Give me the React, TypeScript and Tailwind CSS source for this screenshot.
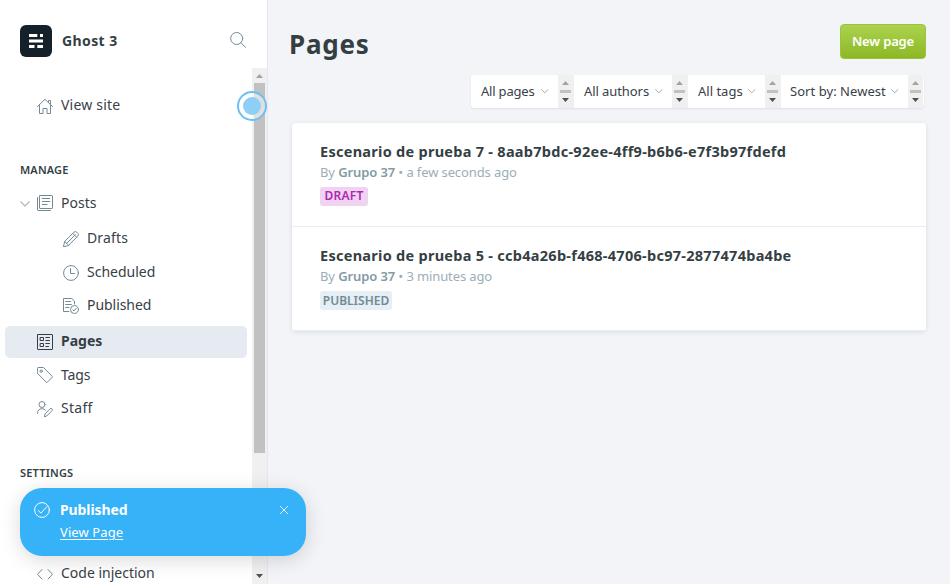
import type { ReactNode } from "react";

function Icon({ children, className = "text-[#738a94]" }: { children: ReactNode; className?: string }) {
  return (
    <svg
      viewBox="0 0 16 16"
      className={"size-4 shrink-0 " + className}
      fill="none"
      stroke="currentColor"
      strokeWidth="1"
      strokeLinecap="round"
      strokeLinejoin="round"
    >
      {children}
    </svg>
  );
}

function Chevron({ className }: { className: string }) {
  return (
    <svg viewBox="0 0 10 6" className={"shrink-0 " + className} fill="none" stroke="currentColor" strokeWidth="1.2" strokeLinecap="round" strokeLinejoin="round">
      <path d="M0.7 0.8 5 5 9.3 0.8" />
    </svg>
  );
}

function Arrow({ up = false, className }: { up?: boolean; className: string }) {
  return (
    <svg viewBox="0 0 7 4" className={"h-1 w-[7px] shrink-0 " + className} fill="currentColor">
      <path d={up ? "M0 4 3.5 0 7 4Z" : "M0 0 3.5 4 7 0Z"} />
    </svg>
  );
}

function NavRow({ icon, label, className, textClass }: { icon: ReactNode; label: string; className: string; textClass: string }) {
  return (
    <div className={"flex shrink-0 items-center " + className}>
      {icon}
      <span className={"ml-2 whitespace-nowrap " + textClass}>{label}</span>
    </div>
  );
}

function Filter({ label, className, textClass, last = false }: { label: string; className: string; textClass: string; last?: boolean }) {
  return (
    <div className={"flex h-full shrink-0 items-center bg-white pl-2.5 " + className}>
      <span className={"whitespace-nowrap text-[13px] text-[#394047] " + textClass}>{label}</span>
      <Chevron className="mr-[9.5px] ml-auto h-[4.5px] w-[7.5px] text-[#95a5ae]" />
      <div className={"flex h-full flex-col items-center bg-[#f0f0f0] pt-1.5 " + (last ? "w-[15px]" : "w-4 pr-px")}>
        <Arrow up className="text-[#a3a3a3]" />
        <div className="mt-[5px] h-[3px] w-[11px] bg-[#c1c1c1]" />
        <Arrow className="mt-[5px] text-[#505050]" />
      </div>
    </div>
  );
}

function PageRow({ title, time, badge }: { title: string; time: string; badge: ReactNode }) {
  return (
    <div className="flex h-[104px] flex-col items-start border-b border-[#e5eff5] pl-7 pt-[18px]">
      <h3 className="h-[21px] text-[14.5px] leading-5 font-bold tracking-[0.275px] whitespace-nowrap text-[#343f44]">{title}</h3>
      <p className="h-5 text-[13px] leading-5 tracking-[-0.11px] whitespace-nowrap text-[#9baeb8]">
        By <span className="font-semibold text-[#839aa6]">Grupo 37</span> • {time}
      </p>
      {badge}
    </div>
  );
}

export default function App() {
  return (
    <div className="relative flex h-[584px] w-[950px] overflow-hidden bg-[#f3f4f8] font-['Noto_Sans','Open_Sans',sans-serif] text-[#394047]">
      <aside className="flex h-full w-[268px] shrink-0 flex-col border-r border-[#e4e8ee] bg-white">
        <header className="flex h-[68px] shrink-0 items-center pt-3.5 pl-5">
          <svg viewBox="0 0 32 32" className="size-8 shrink-0">
            <rect width="32" height="32" rx="6" fill="#15212a" />
            <g fill="#fff">
              <rect x="9" y="9" width="8.3" height="3" />
              <rect x="20" y="9" width="3" height="3" />
              <rect x="9" y="14.5" width="14" height="3" />
              <rect x="9" y="20" width="5.5" height="3" />
              <rect x="17.3" y="20" width="5.7" height="3" />
            </g>
          </svg>
          <span className="ml-2.5 pb-0.5 text-[14px] font-bold tracking-[0.4px] whitespace-nowrap text-[#343f44]">Ghost 3</span>
          <Icon className="mr-[21px] mb-0.5 ml-auto text-[#738a94]">
            <circle cx="6.7" cy="6.5" r="6" />
            <path d="M11 10.8 15.5 15.4" />
          </Icon>
        </header>
        <div className="flex min-h-0 flex-1">
          <nav className="flex min-w-0 flex-1 flex-col overflow-hidden pt-5 text-[14px]">
            <NavRow
              className="h-[34px] pl-[37px]"
              textClass="pb-0.5 tracking-[0.2px]"
              label="View site"
              icon={
                <Icon className="mt-0.5 text-[#738a94]">
                  <path d="M.5 8.6 8 1.3l7.5 7.3M2.5 7v8.5H6v-5h4v5h3.5V7M11.5 4.4V2.5h2v4" />
                </Icon>
              }
            />
            <h2 className="mt-[38px] h-5 shrink-0 pl-5 text-[11px] leading-5 font-semibold tracking-[0.15px] text-[#343f44]">MANAGE</h2>
            <div className="mt-1.5 flex h-[34px] shrink-0 items-center pl-5">
              <Chevron className="mt-px h-[6px] w-[10px] text-[#adbac1]" />
              <NavRow
                className="ml-[7px]"
                textClass="pb-0.5"
                label="Posts"
                icon={
                  <Icon>
                    <rect x="2.5" y=".5" width="13" height="13" rx=".6" />
                    <path d="M.5 2.5v12.4q0 .6.6.6H13.5M5.3 3.5h7.4M5.3 6.5h7.4M5.3 9.5h4.8" />
                  </Icon>
                }
              />
            </div>
            <NavRow
              className="mt-px h-[34px] pl-[63px]"
              textClass="pb-0.5 tracking-[0.15px]"
              label="Drafts"
              icon={
                <Icon className="mt-0.5 text-[#738a94]">
                  <path d="M.5 15.5 1.7 10.4 10.9 1.2q1.4-1.3 2.8 0l1.1 1.1q1.3 1.4 0 2.8L5.6 14.3ZM1.7 10.4l3.9 3.9M3.7 12.3 12.3 3.7M9.7 2.4l3.9 3.9" />
                </Icon>
              }
            />
            <NavRow
              className="h-[34px] pl-[63px]"
              textClass="pb-0.5"
              label="Scheduled"
              icon={
                <Icon className="mt-0.5 text-[#738a94]">
                  <circle cx="8" cy="8" r="7.4" />
                  <path d="M7.5 3.5v5h4" />
                </Icon>
              }
            />
            <NavRow
              className="h-[33px] pl-[63px]"
              textClass="pb-0.5 tracking-[-0.05px]"
              label="Published"
              icon={
                <Icon className="mt-px text-[#738a94]">
                  <path d="M6 13.5H.5V.5h8.3l2.7 2.7V6M2.7 3.5h5M2.7 6.5h5.7M2.7 9.5h3.2" />
                  <circle cx="11.5" cy="11.5" r="4" />
                  <path d="m9.8 11.7 1.2 1.2 2.2-2.6" />
                </Icon>
              }
            />
            <NavRow
              className="mt-1 ml-[5px] h-8 w-[242px] rounded-[5px] bg-[#e6ebf2] pl-8"
              textClass="pb-[3px] font-bold text-[#343f44]"
              label="Pages"
              icon={
                <Icon className="text-[#343f44]">
                  <rect x=".5" y=".5" width="15" height="15" rx=".5" />
                  <path d="M3.5 3.5h3v3h-3zM3.5 9.5h3v3h-3zM8.8 3.5h3.7M8.8 6.5h3.7M8.8 9.5h3.7M8.8 12.5h2.7" />
                </Icon>
              }
            />
            <NavRow
              className="h-[34px] pl-[37px]"
              textClass="pb-0.5 tracking-[-0.15px]"
              label="Tags"
              icon={
                <Icon>
                  <path d="M.5 1.1q0-.6.6-.6h5.3l8.8 8.8q.5.5 0 1L10.3 15.2q-.5.5-1 0L.5 6.4Z" />
                  <circle cx="4.2" cy="4.2" r="1.2" />
                </Icon>
              }
            />
            <NavRow
              className="h-8 pl-[37px]"
              textClass="pb-0.5 tracking-[0.3px]"
              label="Staff"
              icon={
                <Icon className="mt-0.5 text-[#738a94]">
                  <circle cx="5" cy="3.5" r="3" />
                  <path d="M.5 12.3c0-3 1.9-4.6 4.5-4.6q2.2 0 3.3 1.3M7.5 15.5l.6-2.7 5-5q1-.9 1.9 0 .9 1 0 1.9l-5 5Z" />
                </Icon>
              }
            />
            <h2 className="mt-[39px] h-5 shrink-0 pl-5 text-[11px] leading-5 font-semibold tracking-[0.2px] text-[#343f44]">SETTINGS</h2>
            <NavRow
              className="mt-[73px] h-[34px] pl-[37px]"
              textClass="pb-0.5"
              label="Code injection"
              icon={
                <Icon className="mt-0.5 text-[#738a94]">
                  <path d="M5 3.5.5 8.3 5 13M11 3.5l4.5 4.8L11 13" />
                </Icon>
              }
            />
          </nav>
          <div className="flex w-[15px] flex-col items-center bg-[#f0f0f0] pt-1.5">
            <Arrow up className="text-[#a3a3a3]" />
            <div className="mt-[5px] h-[370px] w-[11px] shrink-0 bg-[#c1c1c1]" />
            <Arrow className="mt-auto mb-[6px] text-[#505050]" />
          </div>
        </div>
      </aside>

      <main className="flex min-w-0 flex-1 flex-col">
        <div className="mt-6 flex h-[35px] items-center justify-between pr-6 pl-[21px]">
          <h1 className="mt-1.5 text-[26px] font-bold tracking-[0.8px] text-[#343f44]">Pages</h1>
          <button className="flex h-[35px] w-[86px] items-center justify-center rounded-[4px] border border-[#9cc433] bg-linear-to-b from-[#abd34d] to-[#8db824] text-[13px] font-semibold tracking-[-0.15px] whitespace-nowrap text-white">
            New page
          </button>
        </div>
        <div className="mt-4 mr-[26px] flex h-[33px] self-end overflow-hidden rounded-[4px] bg-white shadow-[0_1px_2px_rgba(60,80,100,0.12)]">
          <Filter label="All pages" className="w-[103px]" textClass="tracking-[-0.2px]" />
          <Filter label="All authors" className="w-[114px]" textClass="tracking-[-0.08px]" />
          <Filter label="All tags" className="w-[93px]" textClass="" />
          <Filter label="Sort by: Newest" className="w-[142px]" textClass="-ml-px tracking-[0.05px]" last />
          <div className="w-px" />
        </div>
        <section className="mt-[15px] ml-6 h-[208px] w-[634px] overflow-hidden rounded-[4px] bg-white shadow-[0_1px_5px_rgba(60,80,100,0.14)]">
          <PageRow
            title="Escenario de prueba 7 - 8aab7bdc-92ee-4ff9-b6b6-e7f3b97fdefd"
            time="a few seconds ago"
            badge={<span className="mt-[5px] flex h-[19px] w-12 items-center justify-center rounded-[3px] bg-[#f0d3f0] pb-px text-[12px] font-semibold tracking-[0.2px] text-[#ad26b4]">DRAFT</span>}
          />
          <PageRow
            title="Escenario de prueba 5 - ccb4a26b-f468-4706-bc97-2877474ba4be"
            time="3 minutes ago"
            badge={<span className="mt-[5px] flex h-[19px] w-[72px] items-center justify-center rounded-[3px] bg-[#e5eff5] text-[12px] font-semibold text-[#738a94]">PUBLISHED</span>}
          />
        </section>
      </main>

      <div className="absolute top-[91px] left-[237px] flex size-[30px] items-center justify-center rounded-full border-2 border-[#6dc0ef] bg-white/50">
        <div className="size-[18px] rounded-full bg-[#8ed0f5]" />
      </div>

      <div className="absolute top-[488px] left-5 flex h-[68px] w-[286px] rounded-[22px] bg-[#35b2f8] px-3.5 pt-3 text-white shadow-[0_4px_20px_rgba(0,0,0,0.15)]">
        <Icon className="mt-0.5 text-white">
          <circle cx="8" cy="8" r="7.4" />
          <path d="m4.3 8.5 2.6 2.7 6-6.6" />
        </Icon>
        <div className="ml-2.5 flex flex-col items-start">
          <span className="h-5 text-[14px] leading-5 font-bold tracking-[-0.1px] whitespace-nowrap">Published</span>
          <a className="mt-[3px] text-[13px] leading-[18px] tracking-[0.1px] whitespace-nowrap underline underline-offset-2">View Page</a>
        </div>
        <svg viewBox="0 0 8 8" className="mt-[6px] mr-[4px] ml-auto size-2 shrink-0" stroke="white" strokeWidth="0.9" strokeLinecap="round">
          <path d="m.4.4 7.2 7.2M7.6.4.4 7.6" />
        </svg>
      </div>
    </div>
  );
}
